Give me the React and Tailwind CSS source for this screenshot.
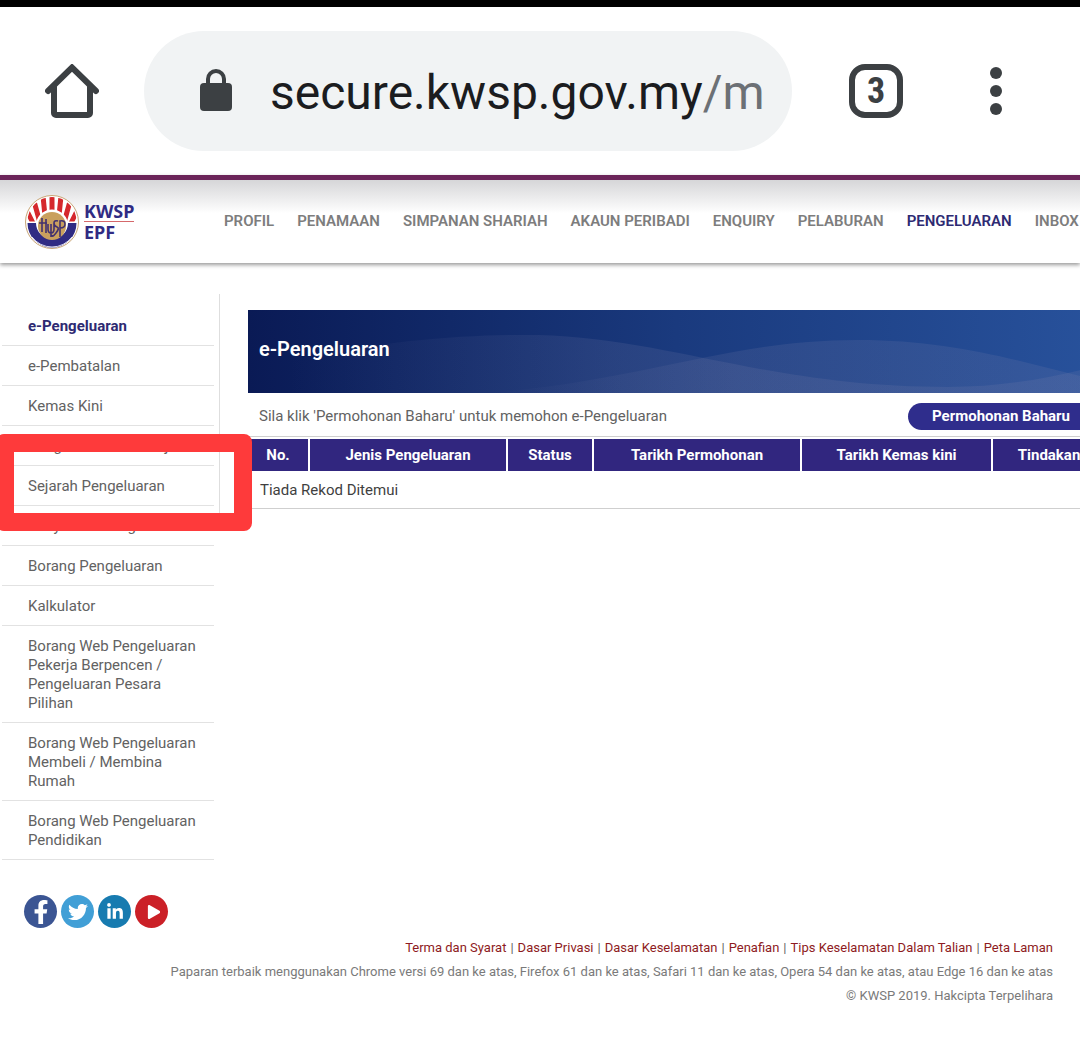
import React from 'react';
import { FaFacebookF, FaTwitter, FaLinkedinIn, FaPlay } from 'react-icons/fa';

const navItems = [
  'PROFIL',
  'PENAMAAN',
  'SIMPANAN SHARIAH',
  'AKAUN PERIBADI',
  'ENQUIRY',
  'PELABURAN',
  'PENGELUARAN',
  'INBOX',
];

const sideItems = [
  'e-Pengeluaran',
  'e-Pembatalan',
  'Kemas Kini',
  'Pengemaskinian Kerja',
  'Sejarah Pengeluaran',
  'Penyataan Pengeluaran',
  'Borang Pengeluaran',
  'Kalkulator',
  'Borang Web Pengeluaran Pekerja Berpencen / Pengeluaran Pesara Pilihan',
  'Borang Web Pengeluaran Membeli / Membina Rumah',
  'Borang Web Pengeluaran Pendidikan',
];

const columns = [
  { label: 'No.', width: 'w-[61px]' },
  { label: 'Jenis Pengeluaran', width: 'w-[198px]' },
  { label: 'Status', width: 'w-[86px]' },
  { label: 'Tarikh Permohonan', width: 'w-[208px]' },
  { label: 'Tarikh Kemas kini', width: 'w-[191px]' },
  { label: 'Tindakan', width: 'w-[113px]' },
];

const socials = [
  { label: 'Facebook', Icon: FaFacebookF, color: 'bg-[#3b5593]', size: 'size-6' },
  { label: 'Twitter', Icon: FaTwitter, color: 'bg-[#419fd6]', size: 'size-5' },
  { label: 'LinkedIn', Icon: FaLinkedinIn, color: 'bg-[#177bb0]', size: 'size-[18px]' },
  { label: 'YouTube', Icon: FaPlay, color: 'bg-[#cb2027]', size: 'size-3.5 ml-1' },
];

const footerLinks = [
  'Terma dan Syarat',
  'Dasar Privasi',
  'Dasar Keselamatan',
  'Penafian',
  'Tips Keselamatan Dalam Talian',
  'Peta Laman',
];

const BrowserBar = () => {
  return (
    <div className="flex h-[175px] items-center border-t-[7px] border-black pl-[45px] pr-[75px]">
      <button aria-label="Home" className="shrink-0">
        <svg viewBox="0 0 54 54" className="size-[54px]" fill="none" stroke="#3c4043" strokeWidth="6" strokeLinecap="round" strokeLinejoin="round">
          <path d="M3 27 27 3.500 51 27" strokeLinejoin="miter" />
          <path d="M9 23v26a2 2 0 0 0 2 2h32a2 2 0 0 0 2-2V23" />
        </svg>
      </button>
      <div className="ml-[45px] flex h-[120px] min-w-0 flex-1 items-center rounded-full bg-[#f1f3f4] pl-14 pr-6">
        <svg viewBox="0 0 32 44" className="h-11 w-8 shrink-0">
          <path d="M8 16v-6a8 8 0 0 1 16 0v6" fill="none" stroke="#3c4043" strokeWidth="4" />
          <rect y="14" width="32" height="28" rx="4" fill="#3c4043" />
        </svg>
        <span className="ml-[38px] mt-1 overflow-hidden whitespace-nowrap text-[48px] leading-[60px] text-[#1b1c1f]">
          secure.kwsp.gov.my<span className="text-[#6c7075]">/m</span>
        </span>
      </div>
      <button
        aria-label="Open tabs"
        className="ml-[57px] flex size-[54px] shrink-0 items-center justify-center rounded-2xl border-[6px] border-[#3c4043] text-[36px] font-bold leading-none text-[#3c4043]"
      >
        <span className="font-['Roboto_Condensed','Roboto',sans-serif]">3</span>
      </button>
      <button aria-label="Menu" className="ml-[84px] flex w-[18px] shrink-0 flex-col items-center gap-1.5">
        <span className="size-3 rounded-full bg-[#3c4043]" />
        <span className="size-3 rounded-full bg-[#3c4043]" />
        <span className="size-3 rounded-full bg-[#3c4043]" />
      </button>
    </div>
  );
};

const Logo = () => {
  return (
    <a href="#" className="flex w-[199px] shrink-0 items-center">
      <svg viewBox="0 0 54 54" className="size-[54px]">
        <defs>
          <clipPath id="upper">
            <path d="M2.500 26.500a24.500 24.500 0 0 1 49 0H42.500a16 16 0 0 0-31 0z" />
          </clipPath>
        </defs>
        <circle cx="27" cy="27" r="26.500" fill="#fff" stroke="#c9a677" strokeWidth="1" />
        <g clipPath="url(#upper)" stroke="#d5282c" strokeWidth="5">
          <path d="M2 16 8 28M9.500 8l5 18M18 1l2 20M27 0v20M36 1l-2 20M44.500 8l-5 18M52 16l-6 12" />
        </g>
        <path d="M2.500 28a24.500 24.500 0 0 0 49 0H43a16 16 0 0 1-32 0z" fill="#302b83" />
        <path d="M7 42a25 25 0 0 0 40 0" fill="none" stroke="#dcdced" strokeWidth="1" />
        <circle cx="27" cy="31" r="14" fill="#c9a05e" />
        <g fill="none" stroke="#40306f" strokeWidth="1.600">
          <path d="M17 23v14M14 28h8M21 24v14M23 29v5q0 4 3 4t3-4v-6M26 29v13M33 26q-4-1-4 2t3 4-1 6-4 2M35 42V26q5-1 5 3t-5 4" />
        </g>
      </svg>
      <span className="ml-[5px] flex flex-col font-['Noto_Sans',sans-serif] text-lg font-bold leading-[20px] text-[#302b83]">
        <span className="border-b border-[#d5686b]">KWSP</span>
        <span>EPF</span>
      </span>
    </a>
  );
};

const SiteHeader = () => {
  return (
    <header className="flex h-[88px] items-center overflow-hidden whitespace-nowrap border-t-[5px] border-[#6b2459] bg-linear-to-b from-[#d6d6d8] to-white to-40% pl-[25px]">
      <Logo />
      <nav className="flex gap-[23px] text-[15px] font-semibold text-[#7d7d7d]">
        {navItems.map((item) => (
          <a key={item} href="#" className={item === 'PENGELUARAN' ? 'text-[#2e2a72]' : ''}>
            {item}
          </a>
        ))}
      </nav>
    </header>
  );
};

const Sidebar = () => {
  return (
    <aside className="w-[220px] shrink-0 pl-0.5 pr-1.5">
      <ul className="text-[15px] leading-[19px] text-[#626262]">
        {sideItems.map((item) => (
          <li key={item} className="relative border-b border-[#e2e2e2] pb-[9px] pl-[26px] pr-2 pt-[11px]">
            <a href="#" className={item === 'e-Pengeluaran' ? 'font-bold text-[#2e2a72]' : ''}>
              {item}
            </a>
            {/* red marker around the history entry */}
            {item === 'Sejarah Pengeluaran' && (
              <div className="absolute -left-1.5 -top-8 z-10 h-[97px] w-64 rounded-lg border-[18px] border-[#fe3a3b]" />
            )}
          </li>
        ))}
      </ul>
      <div className="mt-[35px] flex gap-1 pl-[22px]">
        {socials.map(({ label, Icon, color, size }) => (
          <a
            key={label}
            href="#"
            aria-label={label}
            className={`flex size-[33px] items-center justify-center overflow-hidden rounded-full text-white ${color}`}
          >
            <Icon className={size} />
          </a>
        ))}
      </div>
    </aside>
  );
};

const Banner = () => {
  return (
    <div className="grid h-[83px] items-center overflow-hidden bg-linear-to-r from-[#0a1a55] via-[#1a3a7e] to-[#28529c]">
      <svg viewBox="0 0 857 83" preserveAspectRatio="none" className="col-start-1 row-start-1 h-[83px] w-full">
        <defs>
          <linearGradient id="wave" x1="0" x2="1" y1="0" y2="0">
            <stop offset="0" stopColor="#8a8ab0" stopOpacity="0" />
            <stop offset="0.400" stopColor="#8a8ab0" stopOpacity="0.150" />
            <stop offset="1" stopColor="#8a8ab0" stopOpacity="0.150" />
          </linearGradient>
        </defs>
        <path d="M40 50C140 30 220 24 290 25C420 28 520 77 700 77C760 77 810 66 857 54V83H40z" fill="url(#wave)" />
        <path d="M240 83C400 70 480 30 610 30C710 30 780 54 857 72V83z" fill="url(#wave)" />
      </svg>
      <h1 className="col-start-1 row-start-1 pb-1.5 pl-[11px] text-[20px] font-semibold leading-6 text-white">e-Pengeluaran</h1>
    </div>
  );
};

const Content = () => {
  return (
    <main className="ml-7 w-[857px] shrink-0 pt-4">
      <Banner />
      <div className="flex h-11 items-center justify-between border-b border-[#cfcfcf] pl-[11px] pr-[11px] pt-[3px] text-[15px]">
        <p className="text-[#626262]">Sila klik 'Permohonan Baharu' untuk memohon e-Pengeluaran</p>
        <button className="h-[27px] rounded-full bg-[#2f2d8c] px-6 font-bold text-white">Permohonan Baharu</button>
      </div>
      <table className="mt-0.5 w-full table-fixed border-collapse text-[15px]">
        <thead className="text-white">
          <tr>
            {columns.map((col) => (
              <th
                key={col.label}
                className={`h-8 border-r-2 border-white bg-[#31267f] bg-clip-padding font-bold last:border-r-0 ${col.width}`}
              >
                {col.label}
              </th>
            ))}
          </tr>
        </thead>
        <tbody>
          <tr>
            <td colSpan="6" className="h-[37px] border-b border-[#cfcfcf] pl-3 pt-0.5 text-[#3f3f3f]">
              Tiada Rekod Ditemui
            </td>
          </tr>
        </tbody>
      </table>
    </main>
  );
};

const Footer = () => {
  return (
    <footer className="mt-2.5 flex flex-col items-end gap-1 pb-12 pr-[27px] text-right text-[13px] leading-5 text-[#7a7a7a]">
      <div className="flex gap-1 text-[#8e1b22]">
        {footerLinks.map((link, i) => (
          <React.Fragment key={link}>
            {i > 0 && <span className="text-[#626262]">|</span>}
            <a href="#">{link}</a>
          </React.Fragment>
        ))}
      </div>
      <p>
        Paparan terbaik menggunakan Chrome versi 69 dan ke atas, Firefox 61 dan ke atas, Safari 11 dan ke atas, Opera 54
        dan ke atas, atau Edge 16 dan ke atas
      </p>
      <p>© KWSP 2019. Hakcipta Terpelihara</p>
    </footer>
  );
};

export default function App() {
  return (
    <div className="min-h-screen overflow-hidden bg-white font-['Roboto',sans-serif]">
      <BrowserBar />
      <div className="shadow-[0_2px_4px_rgba(0,0,0,0.4)]">
        <SiteHeader />
      </div>
      <div className="flex pt-[31px]">
        <div className="flex">
          <div className="pt-3">
            <Sidebar />
          </div>
          <div className="-ml-px h-[220px] w-px shrink-0 bg-[#dedede]" />
        </div>
        <Content />
      </div>
      <Footer />
    </div>
  );
}
